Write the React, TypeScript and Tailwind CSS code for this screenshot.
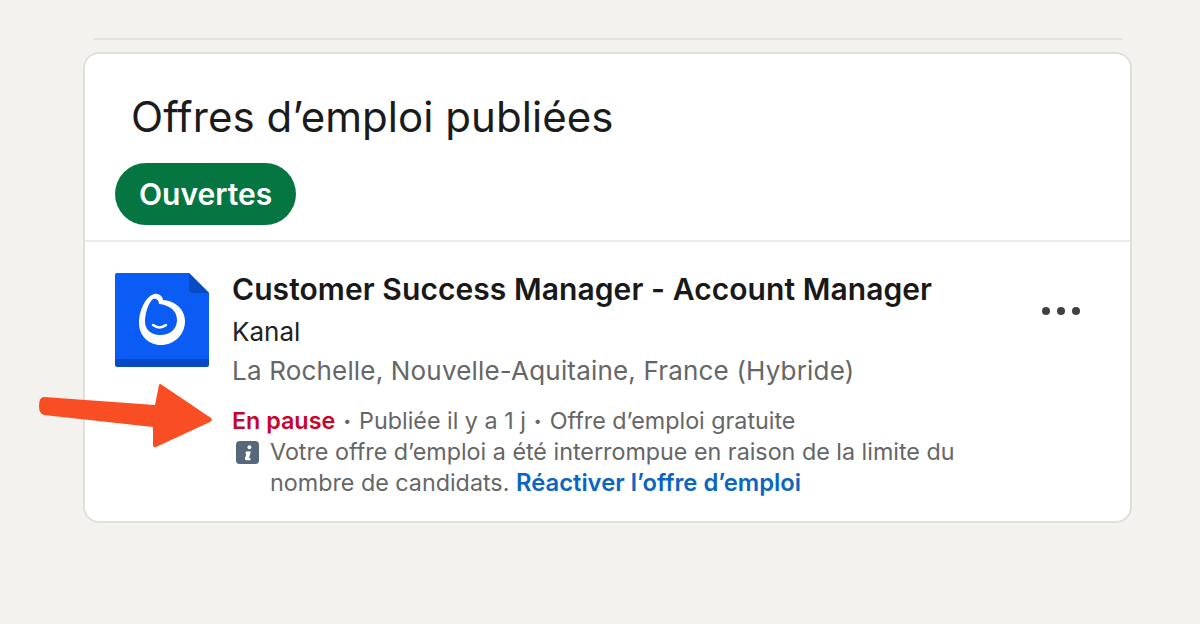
import React from 'react';

const font = "font-['Inter','Liberation_Sans',sans-serif]";

const DocLogo = () => (
  <svg width="94" height="94" viewBox="0 0 94 94" className="mt-[2px] shrink-0">
    <path d="M2 0H74L94 20V91a3 3 0 0 1-3 3H3a3 3 0 0 1-3-3V2a2 2 0 0 1 2-2z" fill="#0b5cf5" />
    <path d="M0 86H94V91a3 3 0 0 1-3 3H3a3 3 0 0 1-3-3z" fill="#0a49c4" />
    <path d="M74 0L94 20H78a4 4 0 0 1-4-4z" fill="#0a49c4" />
    <path
      fillRule="evenodd"
      d="M39 21C44 20 48 24 48 27C61 28 70 37 70 48C70 62 59 72 46 72C33 72 24 62 24 50C24 38 30 24 39 21zM38 26C33 30 30 41 30 49C30 56 36 62 45 62C55 62 62 56 62 47C62 38 55 32 44 31C44 28 42 25 38 26z"
      fill="#fff"
    />
    <path d="M38 52c4 3 9 3 13 0" fill="none" stroke="#fff" strokeWidth="2.5" strokeLinecap="round" />
  </svg>
);

const Arrow = () => (
  <svg width="180" height="72" viewBox="0 0 180 72" className="absolute left-[38px] top-[380px]">
    <path
      d="M6 17L117 25L121 5Q122 3 124 5L173 38Q175 40 172 42L118 67Q115 68 115 65L115 47L6 35Q1 34 1 26Q1 17 6 17z"
      fill="#f94e23"
    />
  </svg>
);

const InfoBadge = () => (
  <svg width="23" height="23" viewBox="0 0 24 24" className="shrink-0">
    <rect width="24" height="24" rx="4" fill="#56687a" />
    <circle cx="14" cy="6.5" r="2" fill="#fff" />
    <path d="M10.5 11h5l-1.8 6.5c-.1.5.4.7 1.6.5l-.4 2h-4c-1.2 0-1.8-.7-1.5-2l1.5-5H9.5z" fill="#fff" />
  </svg>
);

export default function App() {
  return (
    <div className={`relative h-[624px] w-[1200px] overflow-hidden bg-[#f4f2ee] ${font}`}>
      <div className="ml-[94px] mr-[78px] h-[40px] border-b-2 border-[#e4e2de]" />

      <div className="ml-[83px] mt-[12px] h-[471px] w-[1049px] rounded-[16px] border-2 border-[#e0dfdc] bg-white">
        <div className="h-[188px] border-b-2 border-[#ebebea] pl-[30px]">
          <h2 className="ml-[16px] pt-[37px] text-[42px] leading-[52px] font-normal tracking-[0.05px] text-[#1b1b1b]">
            Offres d’emploi publiées
          </h2>
          <span className="mt-[20px] inline-flex h-[62px] items-center rounded-full bg-[#057642] px-[24px] text-[30px] font-semibold text-white">
            Ouvertes
          </span>
        </div>

        <div className="flex pl-[30px] pt-[29px]">
          <DocLogo />
          <div className="ml-[23px] w-[740px]">
            <h3 className="text-[30px] leading-[36px] font-semibold tracking-[0.07px] text-[#191919]">
              Customer Success Manager - Account Manager
            </h3>
            <p className="mt-[7px] text-[26px] leading-[36px] text-[#222222]">Kanal</p>
            <p className="mt-[3px] text-[26px] leading-[36px] tracking-[0.18px] text-[#666666]">
              La Rochelle, Nouvelle-Aquitaine, France (Hybride)
            </p>
            <div className="mt-[17px] flex items-center text-[23.3px] leading-[30px] text-[#666666]">
              <span className="font-semibold text-[#c9042c]">En pause</span>
              <span className="mx-[8px] text-[14px]">•</span>
              <span>Publiée il y a 1 j</span>
              <span className="mx-[8px] text-[14px]">•</span>
              <span>Offre d’emploi gratuite</span>
            </div>
            <div className="ml-[4px] flex gap-[11px]">
              <div className="pt-[5px]">
                <InfoBadge />
              </div>
              <div className="text-[23.3px] leading-[31px] text-[#666666]">
                <p>Votre offre d’emploi a été interrompue en raison de la limite du</p>
                <p>
                  <span>nombre de candidats.</span>{' '}
                  <span className="text-[23.8px] font-semibold text-[#0a66c2]">Réactiver l’offre d’emploi</span>
                </p>
              </div>
            </div>
          </div>
          <div className="ml-[70px] mt-[36px] flex h-[8px] gap-[7px]">
            <span className="h-[8px] w-[8px] rounded-full bg-[#404040]" />
            <span className="h-[8px] w-[8px] rounded-full bg-[#404040]" />
            <span className="h-[8px] w-[8px] rounded-full bg-[#404040]" />
          </div>
        </div>
      </div>

      <Arrow />
    </div>
  );
}
